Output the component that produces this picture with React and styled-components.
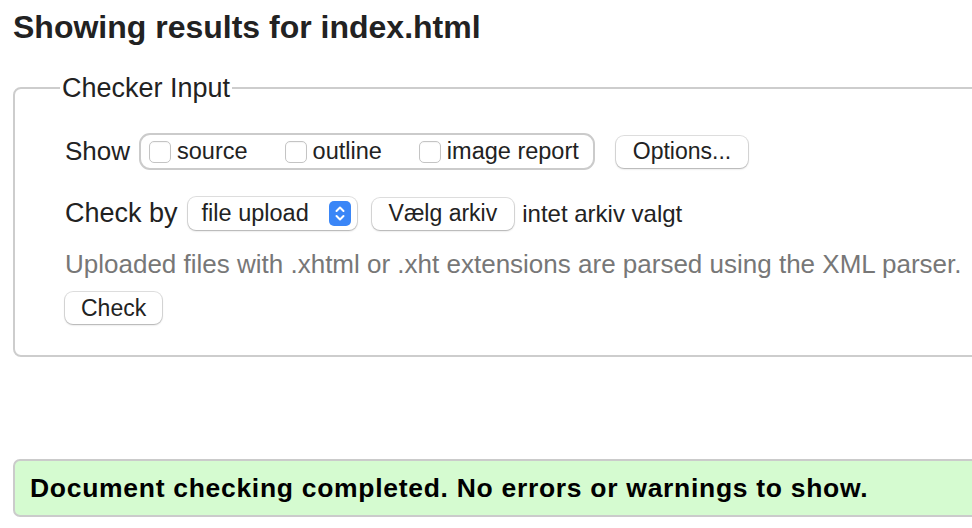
import React from 'react'
import styled, { createGlobalStyle } from 'styled-components'

const GlobalStyle = createGlobalStyle`
  html, body {
    margin: 0;
    padding: 0;
    background: #fff;
    overflow: hidden;
  }
  body {
    font-family: "Liberation Sans", Arial, sans-serif;
    color: #222;
  }
`

const Page = styled.div`
  width: 1010px;
  padding-left: 13px;
`

const Heading = styled.h1`
  margin: 8px 0 0;
  font-size: 32px;
  line-height: 38px;
  font-weight: bold;
  color: #222;
`

const Fieldset = styled.fieldset`
  margin: 26px 0 0;
  padding: 0 0 31px 50px;
  border: 2px solid #cdcdcd;
  border-radius: 8px;
  min-width: 0;
`

const Legend = styled.legend`
  margin-left: -5px;
  padding: 0 2px;
  font-size: 27px;
  line-height: 32px;
  color: #222;
`

const Row = styled.div`
  display: flex;
  align-items: center;
  margin-top: ${p => p.$top}px;
  height: ${p => p.$height}px;
`

const Label = styled.span`
  font-size: ${p => p.$size}px;
  color: #222;
  margin-right: ${p => p.$gap}px;
`

const Group = styled.div`
  display: flex;
  align-items: center;
  height: 100%;
  box-sizing: border-box;
  padding: 0 14px 0 8px;
  border: 2px solid #cbcbcb;
  border-radius: 11px;
  gap: 37px;
`

const Option = styled.label`
  display: flex;
  align-items: center;
  gap: 6px;
  font-size: 23.5px;
  color: #222;
`

const Box = styled.input`
  appearance: none;
  margin: 0;
  width: 22px;
  height: 22px;
  border: 1px solid #c4c4c4;
  border-radius: 5px;
  background: #fff;
  box-shadow: inset 0 1px 1px rgba(0, 0, 0, 0.04);
  box-sizing: border-box;
`

const Button = styled.button`
  height: 32px;
  padding: 0 ${p => p.$pad}px;
  margin-left: ${p => p.$left || 0}px;
  font-family: "Liberation Sans", Arial, sans-serif;
  font-size: 23px;
  color: #222;
  background: #fff;
  border: none;
  border-radius: 8px;
  box-shadow: 0 0 0 1px rgba(0, 0, 0, 0.12), 0 1px 2px rgba(0, 0, 0, 0.22);
  white-space: nowrap;
`

const SelectBox = styled.div`
  display: flex;
  align-items: center;
  justify-content: space-between;
  width: 169px;
  height: 33px;
  box-sizing: border-box;
  padding: 0 6px 0 14px;
  border-radius: 8px;
  background: #fff;
  box-shadow: 0 0 0 1px rgba(0, 0, 0, 0.12), 0 1px 2px rgba(0, 0, 0, 0.22);
`

const SelectText = styled.span`
  font-size: 23.5px;
  color: #222;
`

const Stepper = styled.svg`
  display: block;
`

const FileName = styled.span`
  margin-left: 8px;
  font-size: 24px;
  color: #222;
`

const Hint = styled.p`
  margin: 19px 0 0;
  font-size: 26px;
  line-height: 30px;
  color: #777;
`

const Banner = styled.div`
  margin-top: 102px;
  height: 58px;
  box-sizing: border-box;
  display: flex;
  align-items: center;
  padding-left: 15px;
  background: #d5fbd0;
  border: 2px solid #cbcbcb;
  border-radius: 7px;
  font-size: 26.5px;
  letter-spacing: 0.7px;
  font-weight: bold;
  color: #000;
`

function StepperIcon() {
  return (
    <Stepper width="22" height="25" viewBox="0 0 22 25">
      <rect x="0" y="0" width="22" height="25" rx="5" fill="#3a86f7" />
      <path d="M7.5 10 L11 6.5 L14.5 10" fill="none" stroke="#fff" strokeWidth="2" strokeLinecap="round" strokeLinejoin="round" />
      <path d="M7.5 15 L11 18.5 L14.5 15" fill="none" stroke="#fff" strokeWidth="2" strokeLinecap="round" strokeLinejoin="round" />
    </Stepper>
  )
}

export default function App() {
  return (
    <Page>
      <GlobalStyle />
      <Heading>Showing results for index.html</Heading>
      <Fieldset>
        <Legend>Checker Input</Legend>
        <Row $top={29} $height={37}>
          <Label $size={26} $gap={9}>Show</Label>
          <Group>
            <Option><Box type="checkbox" />source</Option>
            <Option><Box type="checkbox" />outline</Option>
            <Option><Box type="checkbox" />image report</Option>
          </Group>
          <Button $pad={17} $left={21}>Options...</Button>
        </Row>
        <Row $top={27} $height={33}>
          <Label $size={27} $gap={10}>Check by</Label>
          <SelectBox>
            <SelectText>file upload</SelectText>
            <StepperIcon />
          </SelectBox>
          <Button $pad={17} $left={15}>Vælg arkiv</Button>
          <FileName>intet arkiv valgt</FileName>
        </Row>
        <Hint>Uploaded files with .xhtml or .xht extensions are parsed using the XML parser.</Hint>
        <Row $top={13} $height={32}>
          <Button $pad={16}>Check</Button>
        </Row>
      </Fieldset>
      <Banner>Document checking completed. No errors or warnings to show.</Banner>
    </Page>
  )
}
